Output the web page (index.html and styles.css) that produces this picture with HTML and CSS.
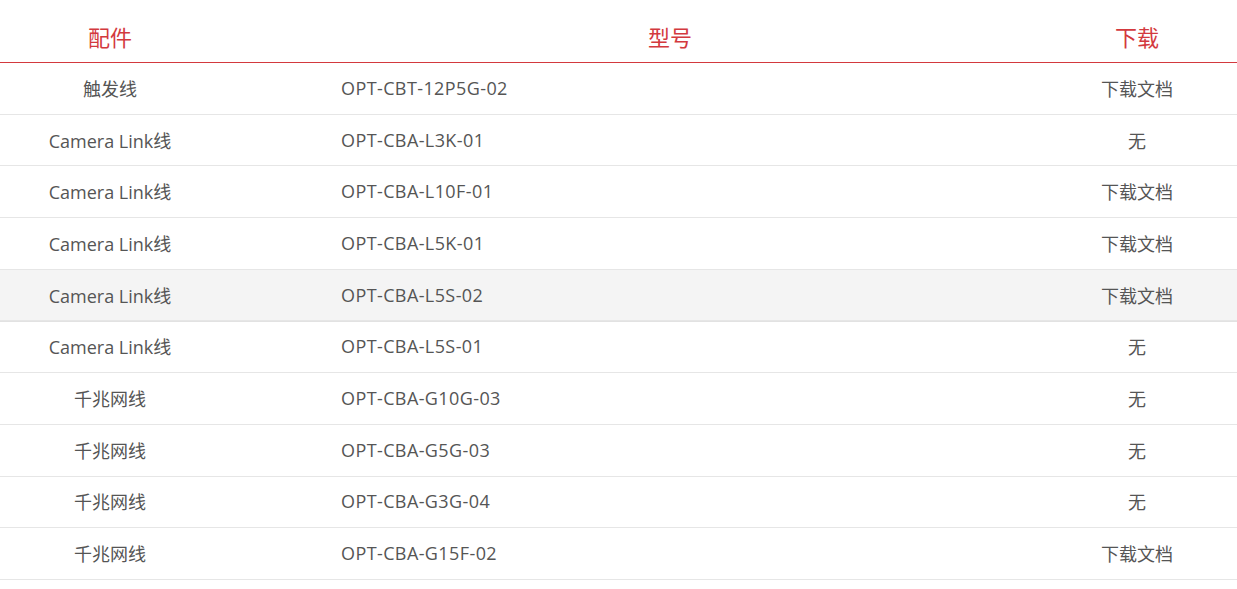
FILE: index.html
```
<!DOCTYPE html>
<html>
  <head>
    <meta charset="utf-8">
    <title>配件下载</title>
    <link rel="stylesheet" href="styles.css">
  </head>
  <body>
    <div class="parts-table">
      <div class="row head">
        <div class="cell name">配件</div>
        <div class="cell model">型号</div>
        <div class="cell download">下载</div>
      </div>
      <div class="row">
        <div class="cell name">触发线</div>
        <div class="cell model">OPT-CBT-12P5G-02</div>
        <div class="cell download">下载文档</div>
      </div>
      <div class="row">
        <div class="cell name">Camera Link线</div>
        <div class="cell model">OPT-CBA-L3K-01</div>
        <div class="cell download">无</div>
      </div>
      <div class="row">
        <div class="cell name">Camera Link线</div>
        <div class="cell model">OPT-CBA-L10F-01</div>
        <div class="cell download">下载文档</div>
      </div>
      <div class="row">
        <div class="cell name">Camera Link线</div>
        <div class="cell model">OPT-CBA-L5K-01</div>
        <div class="cell download">下载文档</div>
      </div>
      <div class="row hover">
        <div class="cell name">Camera Link线</div>
        <div class="cell model">OPT-CBA-L5S-02</div>
        <div class="cell download">下载文档</div>
      </div>
      <div class="row">
        <div class="cell name">Camera Link线</div>
        <div class="cell model">OPT-CBA-L5S-01</div>
        <div class="cell download">无</div>
      </div>
      <div class="row">
        <div class="cell name">千兆网线</div>
        <div class="cell model">OPT-CBA-G10G-03</div>
        <div class="cell download">无</div>
      </div>
      <div class="row">
        <div class="cell name">千兆网线</div>
        <div class="cell model">OPT-CBA-G5G-03</div>
        <div class="cell download">无</div>
      </div>
      <div class="row">
        <div class="cell name">千兆网线</div>
        <div class="cell model">OPT-CBA-G3G-04</div>
        <div class="cell download">无</div>
      </div>
      <div class="row">
        <div class="cell name">千兆网线</div>
        <div class="cell model">OPT-CBA-G15F-02</div>
        <div class="cell download">下载文档</div>
      </div>
    </div>
  </body>
</html>
```

FILE: styles.css
```
body {
  margin: 0;
  background-color: #fff;
  font-family: "Open Sans", "Noto Sans CJK SC", sans-serif;
  color: #555;
}

.parts-table {
  width: 1237px;
}

.row {
  display: grid;
  grid-template-columns: 220px 1fr 200px;
  align-items: center;
  box-sizing: border-box;
  height: 51.7px;
  padding-bottom: 1px;
  border-bottom: 1px solid #e6e6e6;
  font-size: 18px;
}

.row.head {
  height: 63px;
  padding-top: 10px;
  border-bottom: 1px solid #d3393e;
  color: #d3393e;
  font-size: 22px;
}

.row.hover {
  background-color: #f4f4f4;
  box-shadow: 0 1px 0 #e2e2e2;
}

.cell {
  white-space: nowrap;
}

.name,
.download {
  text-align: center;
}

.model {
  padding-left: 121px;
  letter-spacing: 0.4px;
}

.head .model {
  text-align: center;
  padding-left: 83px;
  letter-spacing: 0;
}
```
